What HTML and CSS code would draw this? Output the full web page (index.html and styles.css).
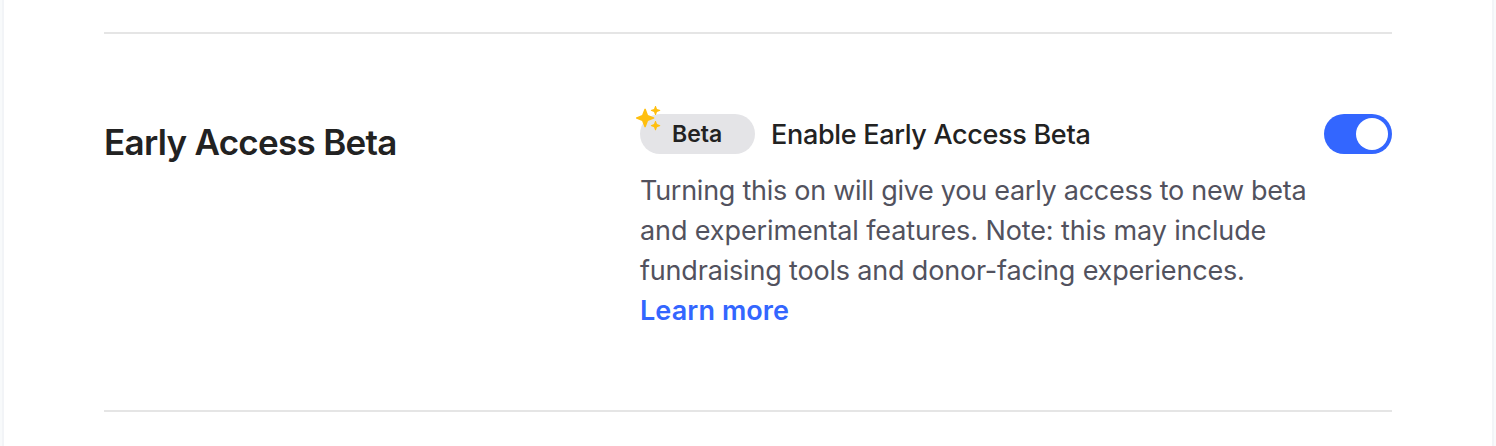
FILE: index.html
```html
<!DOCTYPE html>
<html lang="en">
<head>
<meta charset="utf-8">
<title>Early Access Beta</title>
<link rel="stylesheet" href="styles.css">
</head>
<body>
<main class="panel">
  <section class="setting">
    <h2 class="title"><span>Early Access Beta</span></h2>
    <div class="content">
      <div class="row">
        <span class="badge"><svg class="sparkles" viewBox="0 0 28 28" aria-hidden="true"><path d="M9.500 5.800H10.700L13.000 12.000L19.300 14.400V15.600L13.000 18.000L10.700 24.200H9.500L7.100 18.000L1.000 15.600V14.400L7.100 12.000Z"/><path d="M20.100 2.900H20.900L22.000 5.900L25.200 7.000V7.800L22.000 9.000L20.900 12.000H20.100L19.000 9.000L15.900 7.800V7.000L19.000 5.900Z"/><path d="M20.100 18.000H20.900L22.000 21.000L25.200 22.200V23.000L22.000 24.200L20.900 27.200H20.100L19.000 24.200L15.900 23.000V22.200L19.000 21.000Z"/></svg><span class="badge-text">Beta</span></span>
        <h3 class="label"><span>Enable Early Access Beta</span></h3>
        <button class="toggle" role="switch" aria-checked="true" aria-label="Enable Early Access Beta"><span class="knob"></span></button>
      </div>
      <p class="description"><span class="l1">Turning this on will give you early access to new beta</span><span class="l2">and experimental features. Note: this may include</span><span class="l3">fundraising tools and donor-facing experiences.</span><a class="link">Learn more</a></p>
    </div>
  </section>
</main>
</body>
</html>
```
FILE: styles.css
```css
* { box-sizing: border-box; }
body { margin: 0; height: 446px; overflow: hidden; padding: 0 4px; background: #f8fafb; font-family: Inter, sans-serif; color: #222222; }
.panel { height: 446px; background: #fff; padding: 32px 100px; box-shadow: 0 0 0 2px #f2f4f7; }
.setting { height: 380px; border-top: 2px solid #e5e5e5; border-bottom: 2px solid #e5e5e5; display: grid; grid-template-columns: 536px 1fr; padding-top: 80px; }
.title { margin: 4px 0 0; font-size: 35px; line-height: 48px; font-weight: 600; letter-spacing: -0.7px; white-space: nowrap; }
.row { display: flex; align-items: center; height: 40px; }
.badge { position: relative; width: 115px; height: 40px; border-radius: 20px; background: #e4e4e7; padding-left: 32px; font-size: 23px; line-height: 40px; font-weight: 600; }
.sparkles { position: absolute; left: -5px; top: -11px; width: 28px; height: 28px; fill: #ffbf0f; }
.label { margin: 0 auto 0 16px; padding-top: 2px; font-size: 27px; line-height: 40px; font-weight: 500; letter-spacing: -0.32px; white-space: nowrap; }
.toggle { width: 68px; height: 40px; padding: 4px; border: 0; border-radius: 20px; background: #3366ff; display: flex; justify-content: flex-end; }
.knob { width: 32px; height: 32px; border-radius: 50%; background: #fff; }
.description { margin: 17px 0 0; font-size: 27px; line-height: 40px; color: #52525e; white-space: nowrap; }
.description span, .link { display: block; }
.l1 { letter-spacing: -0.27px; }
.l2 { letter-spacing: -0.11px; }
.l3 { letter-spacing: -0.18px; }
.link { color: #3366ff; font-weight: 600; letter-spacing: 0.1px; }
```
